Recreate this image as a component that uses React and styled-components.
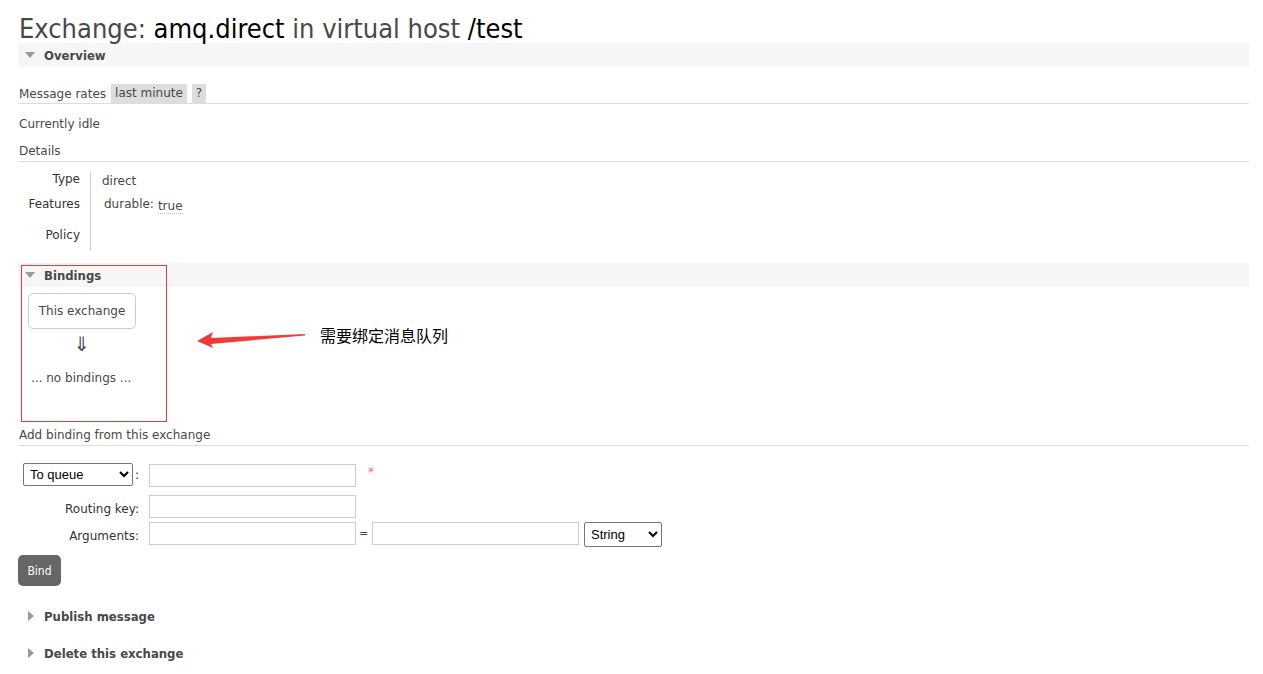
import React from "react";
import styled, { createGlobalStyle } from "styled-components";

const Global = createGlobalStyle`
  html, body { margin: 0; padding: 0; background: #fff; }
  body {
    font-family: "DejaVu Sans", Verdana, sans-serif;
    font-size: 12px;
    color: #484848;
  }
`;

const Page = styled.div`
  padding: 0 14px 20px 18px;
  width: 1231px;
`;

const Title = styled.h1`
  margin: 0;
  padding: 14px 0 0 1px;
  font-family: "DejaVu Sans Condensed", "DejaVu Sans", sans-serif;
  font-stretch: semi-condensed;
  font-size: 27px;
  font-weight: normal;
  line-height: 29px;
  color: #484848;
  height: 29px;
  white-space: nowrap;
`;

const Strong = styled.span`
  color: #000;
`;

const SectionHead = styled.h2`
  margin: ${(p) => p.$mt || 0}px 0 0;
  height: 24px;
  display: flex;
  align-items: center;
  gap: 8px;
  padding-left: 6px;
  background: ${(p) => (p.$plain ? "transparent" : "#f6f6f6")};
  font-family: "DejaVu Sans Condensed", "DejaVu Sans", sans-serif;
  font-stretch: semi-condensed;
  font-size: 13px;
  font-weight: bold;
  color: #484848;
`;

const Tri = styled.span`
  width: 0;
  height: 0;
  margin-right: 1px;
  ${(p) =>
    p.$closed
      ? `border-top: 5px solid transparent; border-bottom: 5px solid transparent; border-left: 6px solid #999; margin-left: 4px; margin-right: 2px;`
      : `border-left: 5px solid transparent; border-right: 5px solid transparent; border-top: 6px solid #999; margin-left: 1px;`}
`;

const RatesRow = styled.div`
  margin-top: 17px;
  display: flex;
  align-items: center;
  gap: 5px;
  height: 19px;
  border-bottom: 1px solid #ddd;
  padding-left: 1px;
`;

const Pill = styled.span`
  background: #ddd;
  padding: 0 4px;
  line-height: 19px;
  color: #484848;
`;

const Para = styled.div`
  margin-top: ${(p) => p.$mt || 0}px;
  padding-left: 1px;
  line-height: 14px;
`;

const SubHead = styled.div`
  margin-top: ${(p) => p.$mt || 0}px;
  padding: 0 0 3px 1px;
  line-height: 14px;
  border-bottom: 1px solid #ddd;
`;

const DetailTable = styled.div`
  margin-top: 10px;
  display: grid;
  grid-template-columns: 73px auto;
  width: max-content;
`;

const Th = styled.div`
  text-align: right;
  padding-right: 10px;
  border-right: 1px solid #ccc;
  color: #333;
  height: ${(p) => p.$h}px;
  line-height: 14px;
  padding-top: ${(p) => p.$pt || 0}px;
  box-sizing: border-box;
`;

const Td = styled.div`
  padding-left: ${(p) => p.$pl || 11}px;
  padding-top: ${(p) => p.$pt || 0}px;
  line-height: 14px;
  display: flex;
  align-items: flex-start;
  gap: 4px;
`;

const Dotted = styled.span`
  border-bottom: 1px dotted #bbb;
  padding-top: 2px;
`;

const BindingsWrap = styled.div`
  position: relative;
  margin-top: 13px;
`;

const BindBody = styled.div`
  padding: 6px 0 0 10px;
  height: 128px;
  display: flex;
  flex-direction: column;
  align-items: flex-start;
`;

const ExchangeBox = styled.div`
  width: 108px;
  height: 36px;
  box-sizing: border-box;
  border: 1px solid #ccc;
  border-radius: 5px;
  display: flex;
  align-items: center;
  justify-content: center;
  color: #484848;
`;

const DownArrow = styled.div`
  width: 108px;
  text-align: center;
  font-family: "DejaVu Sans", sans-serif;
  font-size: 20px;
  line-height: 30px;
  color: #484848;
`;

const NoBindings = styled.div`
  margin-top: 12px;
  padding-left: 3px;
`;

const RedFrame = styled.div`
  position: absolute;
  left: 3px;
  top: 2px;
  width: 146px;
  height: 157px;
  box-sizing: border-box;
  border: 1px solid #e83a3a;
  pointer-events: none;
`;

const Annotation = styled.div`
  position: absolute;
  left: 178px;
  top: 68px;
  display: flex;
  align-items: center;
  gap: 14px;
`;

const Note = styled.span`
  font-family: "Noto Sans CJK SC", sans-serif;
  font-size: 16px;
  color: #000;
  line-height: 20px;
  margin-top: -11px;
`;

const Form = styled.div`
  margin-top: 17px;
  display: grid;
  grid-template-columns: 131px max-content max-content max-content max-content;
  grid-template-rows: 32px 27px 25px;
  align-items: start;
`;

const Label = styled.div`
  text-align: right;
  padding-right: 10px;
  padding-top: ${(p) => p.$pt || 0}px;
  box-sizing: border-box;
  color: #333;
  display: flex;
  justify-content: flex-end;
  align-items: center;
  gap: 2px;
  height: 23px;
`;

const Select = styled.select`
  font-family: "Liberation Sans", Arial, sans-serif;
  font-size: 13px;
  height: ${(p) => p.$h || 23}px;
  width: ${(p) => p.$w}px;
  border: 1px solid #767676;
  border-radius: 2px;
  background: #fff;
  color: #000;
  padding: 0 2px;
  margin: 0 0 0 ${(p) => p.$ml || 0}px;
`;

const Input = styled.input`
  width: 207px;
  height: 23px;
  box-sizing: border-box;
  border: 1px solid #ccc;
  margin: ${(p) => p.$mt || 0}px 0 0;
  padding: 2px;
  font-size: 12px;
`;

const Req = styled.span`
  grid-column: 3 / span 3;
  color: #f66;
  font-size: 12px;
  padding-left: 12px;
  line-height: 14px;
  margin-top: 2px;
`;

const Eq = styled.span`
  width: 16px;
  box-sizing: border-box;
  padding-left: 3px;
  font-size: 11px;
  line-height: 23px;
`;

const BindButton = styled.button`
  margin-top: 8px;
  width: 43px;
  height: 31px;
  border: none;
  border-radius: 5px;
  background: #666;
  color: #fff;
  font-family: "DejaVu Sans Condensed", "DejaVu Sans", sans-serif;
  font-stretch: semi-condensed;
  font-size: 12px;
  padding: 0;
  display: block;
`;

function Arrow() {
  return (
    <svg width="110" height="18" viewBox="0 0 110 18">
      <polygon
        points="1,10 17,1 15,7 109,3 109,4.5 15,13 17,17"
        fill="#f23a3a"
      />
    </svg>
  );
}

export default function App() {
  return (
    <>
      <Global />
      <Page>
        <Title>
          Exchange: <Strong>amq.direct</Strong> in virtual host <Strong>/test</Strong>
        </Title>
        <SectionHead>
          <Tri /> Overview
        </SectionHead>
        <RatesRow>
          <span>Message rates</span>
          <Pill>last minute</Pill>
          <Pill>?</Pill>
        </RatesRow>
        <Para $mt={13}>Currently idle</Para>
        <SubHead $mt={13}>Details</SubHead>
        <DetailTable>
          <Th $h={25} $pt={0}>Type</Th>
          <Td $pt={2}>direct</Td>
          <Th $h={28} $pt={0}>Features</Th>
          <Td $pl={13}>
            <span>durable:</span>
            <Dotted>true</Dotted>
          </Td>
          <Th $h={25} $pt={3}>Policy</Th>
          <Td />
        </DetailTable>
        <BindingsWrap>
          <SectionHead>
            <Tri /> Bindings
          </SectionHead>
          <BindBody>
            <ExchangeBox>This exchange</ExchangeBox>
            <DownArrow>⇓</DownArrow>
            <NoBindings>... no bindings ...</NoBindings>
          </BindBody>
          <RedFrame />
          <Annotation>
            <Arrow />
            <Note>需要绑定消息队列</Note>
          </Annotation>
        </BindingsWrap>
        <SubHead $mt={7}>Add binding from this exchange</SubHead>
        <Form>
          <Label>
            <Select $w={110} $ml={5} defaultValue="queue">
              <option value="queue">To queue</option>
              <option value="exchange">To exchange</option>
            </Select>
            <span>:</span>
          </Label>
          <Input $mt={1} />
          <Req>*</Req>
          <Label $pt={4}>Routing key:</Label>
          <Input />
          <span />
          <span />
          <span />
          <Label $pt={5}>Arguments:</Label>
          <Input />
          <Eq>=</Eq>
          <Input />
          <Select $w={78} $h={25} $ml={5} defaultValue="string">
            <option value="string">String</option>
            <option value="number">Number</option>
            <option value="boolean">Boolean</option>
            <option value="list">List</option>
          </Select>
        </Form>
        <BindButton>Bind</BindButton>
        <SectionHead $plain $mt={18}>
          <Tri $closed /> Publish message
        </SectionHead>
        <SectionHead $plain $mt={13}>
          <Tri $closed /> Delete this exchange
        </SectionHead>
      </Page>
    </>
  );
}
